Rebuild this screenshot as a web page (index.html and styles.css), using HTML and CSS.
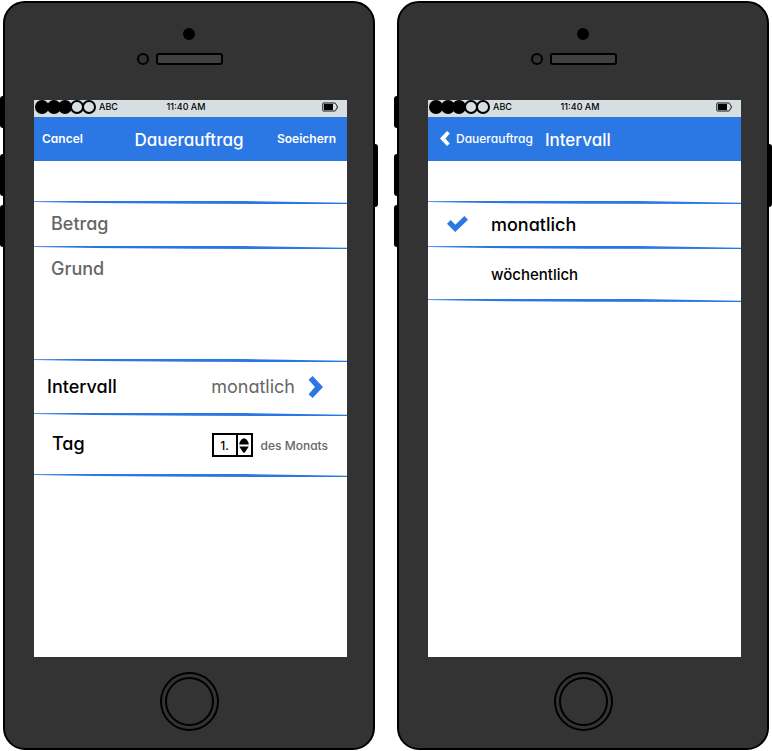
FILE: index.html
```
<!DOCTYPE html>
<html lang="de">
<head>
<meta charset="utf-8">
<meta name="viewport" content="width=device-width, initial-scale=1">
<title>Dauerauftrag</title>
<link rel="stylesheet" href="styles.css">
</head>
<body>
<svg class="defs" aria-hidden="true">
  <symbol id="rule" viewBox="0 0 313 3" preserveAspectRatio="none"><path d="M0 .2 40 0H210L313 1.8V3L160 2.8 60 2.1 0 1Z"/></symbol>
  <symbol id="signal" viewBox="0 0 62 14">
    <g stroke="#000" stroke-width="2"><circle cx="8" cy="7" r="6"/><circle cx="20" cy="7" r="6"/><circle cx="31" cy="7" r="6"/><circle cx="43" cy="7" r="6" fill="none"/><circle cx="55" cy="7" r="6" fill="none"/></g>
  </symbol>
  <symbol id="battery" viewBox="0 0 16 10">
    <path d="M1.5 1H12.5Q14 1 14 2.7 15.3 3 15.3 5 15.3 7 14 7.3 14 9 12.5 9H1.5Q.8 9 .8 8V2Q.8 1 1.5 1Z" fill="none" stroke="#111"/><path d="M2 2H11V8H2Z"/>
  </symbol>
</svg>
<main class="board">
  <section class="phone">
    <i class="key mute"></i><i class="key up"></i><i class="key down"></i><i class="key power"></i>
    <div class="top"><i class="camera"></i><div class="ear"><i class="sensor"></i><i class="speaker"></i></div></div>
    <div class="screen">
      <div class="status"><div class="carrier"><svg class="signal"><use href="#signal"/></svg><span>ABC</span></div><span>11:40 AM</span><svg class="battery"><use href="#battery"/></svg></div>
      <header class="nav"><button type="button">Cancel</button><h1>Dauerauftrag</h1><button type="button" class="end">Soeichern</button></header>
      <form class="list">
        <svg class="rule"><use href="#rule"/></svg>
        <input class="row amount" type="text" placeholder="Betrag" aria-label="Betrag">
        <svg class="rule"><use href="#rule"/></svg>
        <textarea class="row reason" placeholder="Grund" aria-label="Grund"></textarea>
        <svg class="rule"><use href="#rule"/></svg>
        <button type="button" class="row interval"><span>Intervall</span><span class="value">monatlich</span><svg class="next" viewBox="0 0 15 22"><path d="M4.6 0 15 11 4.6 22 .6 18.2 6.9 11 .6 3.8Z"/></svg></button>
        <svg class="rule"><use href="#rule"/></svg>
        <div class="row day"><label for="day">Tag</label>
          <div class="stepper"><input id="day" type="text" value="1."><div class="steps"><button type="button" aria-label="Mehr"><svg viewBox="0 0 10 7"><path d="M5 .3C7.8.8 9.5 3.4 9.8 6.5H.2C.5 3.4 2.2.8 5 .3Z"/></svg></button><button type="button" aria-label="Weniger"><svg viewBox="0 0 10 7"><path d="M.2.5H9.8L5.8 6.4Q5 7.2 4.2 6.4Z"/></svg></button></div></div>
          <span class="unit">des Monats</span></div>
        <svg class="rule"><use href="#rule"/></svg>
      </form>
    </div>
    <div class="bottom"><button type="button" class="home" aria-label="Home"></button></div>
  </section>
  <section class="phone">
    <i class="key mute"></i><i class="key up"></i><i class="key down"></i><i class="key power"></i>
    <div class="top"><i class="camera"></i><div class="ear"><i class="sensor"></i><i class="speaker"></i></div></div>
    <div class="screen">
      <div class="status"><div class="carrier"><svg class="signal"><use href="#signal"/></svg><span>ABC</span></div><span>11:40 AM</span><svg class="battery"><use href="#battery"/></svg></div>
      <header class="nav sub"><button type="button"><svg class="back" viewBox="0 0 10 15"><path d="M7 0 9.8 2.6 5.4 7.5 9.8 12.4 7 15 0 7.5Z"/></svg>Dauerauftrag</button><h1>Intervall</h1></header>
      <form class="list">
        <svg class="rule"><use href="#rule"/></svg>
        <label class="row option"><input type="radio" name="interval" checked><svg class="check" viewBox="0 0 21 16"><path d="M17.4 0 21 3.8 8.2 16 0 7.8 3.7 4.1 8.3 8.7Z"/></svg><span>monatlich</span></label>
        <svg class="rule"><use href="#rule"/></svg>
        <label class="row option weekly"><input type="radio" name="interval"><svg class="check" viewBox="0 0 21 16"><path d="M17.4 0 21 3.8 8.2 16 0 7.8 3.7 4.1 8.3 8.7Z"/></svg><span>wöchentlich</span></label>
        <svg class="rule"><use href="#rule"/></svg>
      </form>
    </div>
    <div class="bottom"><button type="button" class="home" aria-label="Home"></button></div>
  </section>
</main>
</body>
</html>
```
FILE: styles.css
```
:root { --blue: #2b78e4; --grey: #666; --case: #333; }
*, ::before { box-sizing: border-box; }
body { margin: 0; background: #fff; color: #000; font-family: Inter, "Liberation Sans", sans-serif; font-feature-settings: "cv11"; font-size: 18px; font-weight: 500; overflow-x: hidden; }
button, input, textarea { font: inherit; font-feature-settings: inherit; color: inherit; background: none; border: 0; padding: 0; margin: 0; border-radius: 0; }
button { cursor: pointer; }
svg { display: block; flex: none; }
.defs { position: absolute; width: 0; height: 0; }

.board { display: grid; grid-template-columns: 1fr 1fr; gap: 22px; min-height: 100vh; padding: 1px 3px; }
.phone { position: relative; display: flex; flex-direction: column; background: var(--case); border: 2px solid #000; border-radius: 22px; padding: 0 26px 0 29px; }
.key { position: absolute; left: -5px; width: 5px; height: 42px; background: #000; border-radius: 3px 0 0 3px; }
.mute { top: 93px; height: 32px; }
.up { top: 151px; }
.down { top: 202px; }
.power { left: auto; right: -5px; top: 141px; height: 63px; border-radius: 0 3px 3px 0; }

.top { height: 97px; display: flex; flex-direction: column; align-items: center; padding-top: 25px; }
.camera { width: 12px; height: 12px; border-radius: 50%; background: #000; margin-right: 4px; }
.ear { display: flex; align-items: center; gap: 7px; margin: 13px 22px 0 0; }
.sensor { width: 12px; height: 12px; border: 2px solid #000; border-radius: 50%; }
.speaker { width: 67px; height: 12px; border: 2px solid #000; border-radius: 3px; background: #404040; }
.bottom { height: 91px; display: flex; justify-content: center; padding: 15px 2px 0 0; }
.home { display: grid; place-items: center; width: 59px; height: 59px; border: 2px solid #000; border-radius: 50%; }
.home::before { content: ""; display: block; width: 49px; height: 49px; border: 2px solid #000; border-radius: 50%; }

.screen { flex: 1; background: #fff; }
.status { height: 17px; display: grid; grid-template-columns: 1fr auto 1fr; align-items: center; background: #d7dee1; padding: 0 9px 3px 0; font-size: 9px; line-height: 14px; }
.carrier { display: flex; align-items: center; gap: 3px; }
.signal { width: 62px; height: 14px; }
.battery { width: 16px; height: 10px; justify-self: end; }
.nav { height: 44px; display: grid; grid-template-columns: 1fr auto 1fr; align-items: center; background: var(--blue); color: #fff; padding: 0 11px 0 8px; font-size: 12px; font-weight: 600; }
.nav h1 { margin: 0; padding-top: 2px; font-size: 17px; font-weight: 500; line-height: 42px; }
.nav button { justify-self: start; display: flex; align-items: center; gap: 6px; padding-bottom: 2px; }
.nav .end { justify-self: end; }
.sub { grid-template-columns: auto 1fr; gap: 12px; padding-left: 12px; font-weight: 500; }
.back { width: 10px; height: 15px; fill: #fff; }

.list { padding-top: 40px; }
.rule { width: 100%; height: 3px; fill: var(--blue); }
.row { display: flex; align-items: center; width: 100%; }
.row::placeholder { color: var(--grey); opacity: 1; }
.amount { height: 42px; padding: 0 17px 4px; }
.reason { display: block; height: 110px; padding: 8px 17px; resize: none; line-height: 24px; }
.interval { height: 51px; padding: 0 24px 2px 13px; }
.value { margin-left: auto; color: var(--grey); font-weight: 400; }
.next { width: 15px; height: 22px; margin-left: 13px; fill: var(--blue); }
.day { height: 58px; padding: 0 19px 0 18px; }
.day label { padding-bottom: 4px; }
.stepper { display: flex; margin-left: auto; width: 41px; height: 24px; border: 2px solid #000; font-size: 12px; }
.stepper input { width: 22px; text-align: center; }
.steps { flex: 1; border-left: 2px solid #000; display: grid; align-content: center; justify-items: center; gap: 1px; }
.steps svg { width: 10px; height: 7px; }
.unit { margin-left: 8px; font-size: 12px; color: var(--grey); }
.option { height: 42px; padding: 0 19px 2px; gap: 23px; cursor: pointer; }
.option input { appearance: none; position: absolute; }
.check { width: 21px; height: 16px; fill: var(--blue); visibility: hidden; }
.option input:checked + .check { visibility: visible; }
.weekly { height: 50px; padding-bottom: 0; font-size: 15px; }
```
